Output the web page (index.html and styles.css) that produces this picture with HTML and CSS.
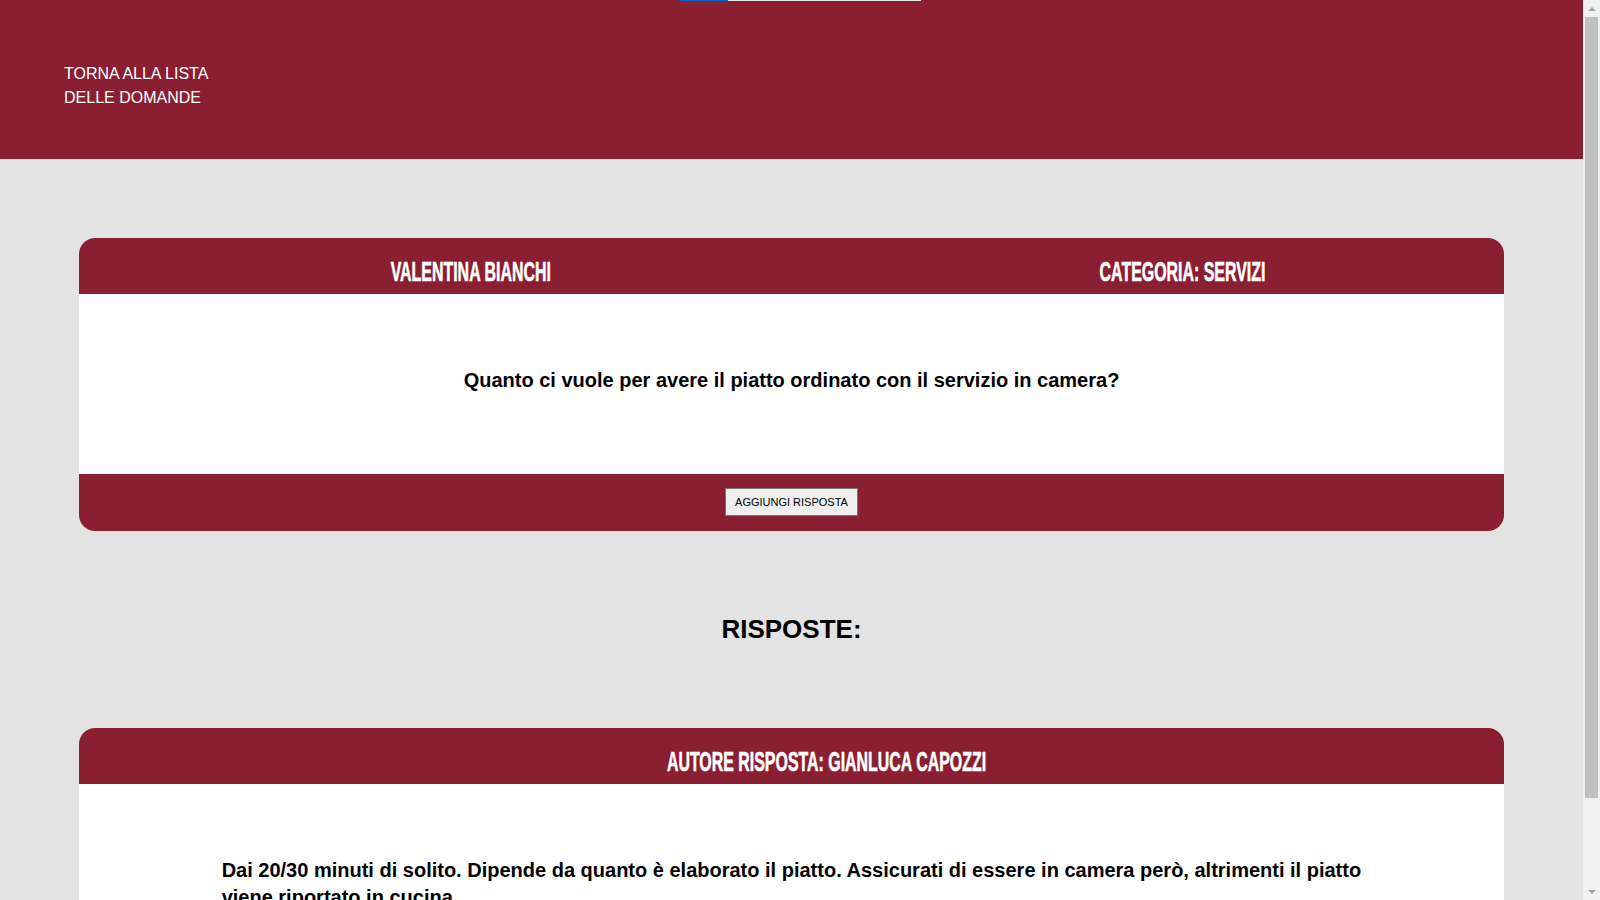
FILE: index.html
```html
<!DOCTYPE html>
<html lang="it">
<head>
<meta charset="utf-8">
<title>Domanda</title>
<link rel="stylesheet" href="styles.css">
</head>
<body>
<div class="loadbar"><span class="loadbar-fill"></span></div>
<header class="topbar">
  <a class="back" href="#">TORNA ALLA LISTA DELLE DOMANDE</a>
</header>
<main class="page">
  <section class="card">
    <div class="card-head">
      <div class="head-cell"><h2 class="head-title">Valentina Bianchi</h2></div>
      <div class="head-cell"><h2 class="head-title">Categoria: Servizi</h2></div>
    </div>
    <div class="card-body q-body">
      <p class="question">Quanto ci vuole per avere il piatto ordinato con il servizio in camera?</p>
    </div>
    <div class="card-foot">
      <button class="btn" type="button">AGGIUNGI RISPOSTA</button>
    </div>
  </section>

  <h2 class="answers-title">RISPOSTE:</h2>

  <section class="card answer-card">
    <div class="card-head">
      <div class="head-cell"><h2 class="head-title">Autore risposta: Gianluca Capozzi</h2></div>
    </div>
    <div class="card-body a-body">
      <p class="answer">Dai 20/30 minuti di solito. Dipende da quanto è elaborato il piatto. Assicurati di essere in camera però, altrimenti il piatto viene riportato in cucina.</p>
    </div>
  </section>
</main>
<div class="scrollbar" aria-hidden="true">
  <span class="sb-btn"><span class="sb-arrow sb-up"></span></span>
  <span class="sb-thumb"></span>
  <span class="sb-track"></span>
  <span class="sb-btn"><span class="sb-arrow sb-down"></span></span>
</div>
</body>
</html>
```
FILE: styles.css
```css
html, body {
  margin: 0;
  padding: 0;
}

body {
  margin-right: 17px;
  background: #e3e3e3;
  font-family: "Liberation Sans", Arial, sans-serif;
  color: #000;
}

.loadbar {
  position: absolute;
  top: 0;
  left: 680px;
  width: 241px;
  height: 1px;
  background: #e6e6e6;
}

.loadbar-fill {
  display: block;
  width: 48px;
  height: 1px;
  background: #0a64c8;
}

.topbar {
  height: 159px;
  box-sizing: border-box;
  padding: 62px 0 0 64px;
  background: #891f31;
}

.back {
  display: block;
  width: 170px;
  color: #fff;
  font-size: 16px;
  line-height: 24px;
  text-decoration: none;
}

.page {
  padding: 79px 0 40px;
}

.card {
  width: 90%;
  margin: 0 auto;
  background: #fff;
  border-radius: 16px;
  overflow: hidden;
}

.card-head {
  display: flex;
  height: 56px;
  box-sizing: border-box;
  padding-top: 21px;
  background: #891f31;
}

.head-cell {
  flex: 1;
  padding-left: 70px;
  text-align: center;
}

.head-title {
  display: inline-block;
  margin: 0;
  color: #fff;
  font-size: 27px;
  line-height: 27px;
  font-weight: 700;
  text-transform: uppercase;
  white-space: nowrap;
  transform: scaleX(0.59);
  -webkit-text-stroke: 0.6px #fff;
}

.q-body {
  padding: 75px 0 83px;
}

.question {
  width: 80%;
  margin: 0 auto;
  text-align: center;
  font-size: 20px;
  line-height: 22px;
  font-weight: 700;
}

.card-foot {
  padding: 14px 0 15px;
  background: #891f31;
  text-align: center;
}

.btn {
  height: 28px;
  box-sizing: border-box;
  padding: 0 9px;
  background: #efefef;
  border: 1px solid #767676;
  border-radius: 0;
  color: #000;
  font-family: "Liberation Sans", Arial, sans-serif;
  font-size: 11px;
  line-height: 26px;
}

.answers-title {
  margin: 83px 0 84px;
  text-align: center;
  font-size: 26px;
  line-height: 30px;
  font-weight: 700;
}

.answer-card {
  border-radius: 16px 16px 0 0;
}

.a-body {
  padding: 73px 0 60px;
}

.answer {
  width: 80%;
  margin: 0 auto;
  font-size: 20px;
  line-height: 26.5px;
  font-weight: 700;
}

/* browser scrollbar */
.scrollbar {
  position: fixed;
  top: 0;
  right: 0;
  width: 17px;
  height: 100vh;
  display: flex;
  flex-direction: column;
  background: #f1f1f1;
}

.sb-btn {
  display: flex;
  align-items: center;
  justify-content: center;
  height: 17px;
  flex: none;
}

.sb-arrow {
  width: 0;
  height: 0;
  border-left: 4px solid transparent;
  border-right: 4px solid transparent;
}

.sb-up {
  border-bottom: 4px solid #a3a3a3;
}

.sb-down {
  border-top: 4px solid #a3a3a3;
}

.sb-thumb {
  flex: none;
  height: 781px;
  margin: 0 2px;
  background: #c1c1c1;
}

.sb-track {
  flex: 1;
}
```
